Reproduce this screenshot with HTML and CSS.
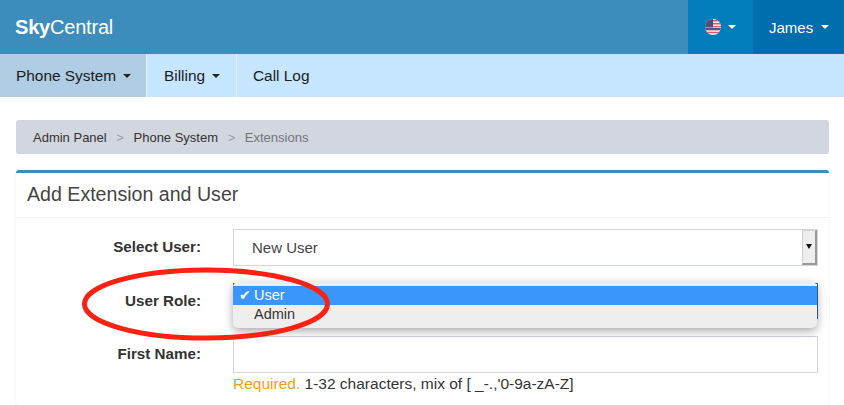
FILE: index.html
```html
<!DOCTYPE html>
<html lang="en">
<head>
<meta charset="utf-8">
<title>Add Extension and User</title>
<link rel="stylesheet" href="styles.css">
</head>
<body>
<header class="topbar">
  <a class="brand"><b>Sky</b>Central</a>
  <div class="top-right">
    <a class="top-item flag-item">
      <svg class="flag" width="16" height="16" viewBox="0 0 16 16">
        <defs><clipPath id="c"><circle cx="8" cy="8" r="8"/></clipPath></defs>
        <g clip-path="url(#c)">
          <rect width="16" height="16" fill="#f2f0f2"/>
          <rect y="1" width="16" height="1.5" fill="#d9596f"/>
          <rect y="4" width="16" height="1.5" fill="#d9596f"/>
          <rect y="7" width="16" height="1.3" fill="#d9596f"/>
          <rect y="10" width="16" height="1.3" fill="#c9283f"/>
          <rect y="12.8" width="16" height="1.4" fill="#d9596f"/>
          <rect y="9" width="16" height="0.8" fill="#1c2a50"/>
          <rect width="8" height="8.4" fill="#45527f"/>
        </g>
      </svg>
      <span class="caret"></span>
    </a>
    <a class="top-item user-item">James<span class="caret"></span></a>
  </div>
</header>
<nav class="subnav">
  <a class="nav-item active">Phone System<span class="caret dark"></span></a>
  <a class="nav-item">Billing<span class="caret dark"></span></a>
  <a class="nav-item">Call Log</a>
</nav>
<main class="content">
  <ol class="crumbs">
    <li>Admin Panel</li>
    <li class="sep">&gt;</li>
    <li>Phone System</li>
    <li class="sep">&gt;</li>
    <li class="current">Extensions</li>
  </ol>
  <section class="panel">
    <h1 class="panel-title">Add Extension and User</h1>
    <form class="panel-body">
      <div class="row">
        <label class="label">Select User:</label>
        <div class="control select-box">
          <span>New User</span>
          <span class="stepper"><i></i></span>
        </div>
      </div>
      <div class="row">
        <label class="label">User Role:</label>
        <div class="control role-box"></div>
      </div>
      <div class="row">
        <label class="label">First Name:</label>
        <div class="control"></div>
      </div>
      <p class="hint"><span class="req">Required.</span> 1-32 characters, mix of [ _-.,'0-9a-zA-Z]</p>
    </form>
  </section>
</main>
<div class="menu">
  <div class="menu-opt selected"><span class="tick">✔</span>User</div>
  <div class="menu-opt">Admin</div>
</div>
<svg class="ring" width="260" height="84" viewBox="0 0 260 84">
  <ellipse cx="130" cy="42" rx="121.5" ry="34" fill="none" stroke="#fb2113" stroke-width="5"/>
</svg>
</body>
</html>
```
FILE: styles.css
```css
* { box-sizing: border-box; }
html, body { margin: 0; height: 405px; overflow: hidden; }
body { position: relative; background: #fff; font-family: "Liberation Sans", Arial, sans-serif; font-size: 14px; color: #333; }

.topbar { display: flex; justify-content: space-between; height: 54px; background: #3c8dbc; }
.brand { padding-left: 15px; line-height: 54px; font-size: 20px; color: #fff; letter-spacing: -0.2px; }
.brand b { font-weight: 700; }
.top-right { display: flex; }
.top-item { display: flex; align-items: center; color: #fff; font-size: 15px; }
.flag-item { width: 65px; padding-left: 17px; background: #007dba; }
.user-item { width: 91px; padding-left: 16px; background: #006dac; }
.flag { display: block; }
.caret { display: inline-block; flex: none; width: 0; height: 0; margin-left: 7px; border-top: 4px solid #fff; border-left: 4px solid transparent; border-right: 4px solid transparent; }
.user-item .caret { margin-left: 8px; }
.caret.dark { margin-left: 7px; border-top-color: #222; }

.subnav { display: flex; height: 43px; background: #c6e5ff; }
.nav-item { display: flex; align-items: center; padding: 0 16px; color: #1c1c1c; font-size: 15.4px; white-space: nowrap; border-right: 1px solid #e6f1f8; }
.nav-item:last-child { border-right: 0; }
.nav-item.active { width: 147px; background: #afcde3; }
.nav-item:nth-child(2) { width: 90px; padding-left: 17px; }

.content { padding: 23px 15px 0 16px; }
.crumbs { display: flex; align-items: center; gap: 9.6px; height: 34px; margin: 0; padding: 0 17px; list-style: none; background: #d2d6de; border-radius: 3px; font-size: 13px; color: #333; }
.sep { color: #9b9ea5; }
.current { color: #72757b; }

.panel { margin-top: 16px; border-top: 3px solid #3c8dbc; border-radius: 3px; box-shadow: 0 0 2px rgba(0,0,0,.12); background: #fff; height: 235px; }
.panel-title { margin: 0; height: 45px; padding: 0 11px; line-height: 42px; font-size: 19.6px; font-weight: 400; color: #444; border-bottom: 1px solid #f2f2f2; }
.panel-body { padding: 11px 11px 0 0; }
.row { display: flex; height: 36.5px; margin-bottom: 17px; }
.row:nth-child(3) { margin-bottom: 0; }
.label { width: 185px; flex: none; padding-top: 9px; text-align: right; font-size: 15.2px; font-weight: 700; color: #333; }
.control { flex: 1; margin-left: 32px; border: 1px solid #d2d6de; background: #fff; }
.select-box { display: flex; justify-content: space-between; align-items: center; padding-left: 18px; font-size: 15px; color: #444; }
.stepper { display: flex; align-items: center; justify-content: center; align-self: stretch; width: 15px; background: #eee; border: 1px solid #d0d0d0; border-right: 2px solid #999; border-bottom: 2px solid #999; }
.stepper i { width: 0; height: 0; border-top: 5px solid #111; border-left: 3px solid transparent; border-right: 3px solid transparent; }
.role-box { border-color: #2b6f9e; }
.hint { margin: 1px 0 0 217px; font-size: 15.5px; color: #333; line-height: 20px; }
.req { color: #f39c12; }

.menu { position: absolute; left: 233px; top: 282px; width: 584px; height: 46px; padding-top: 4px; background: #eee; border-radius: 5px; box-shadow: 0 3px 10px rgba(0,0,0,.35); font-size: 14.5px; color: #333; }
.menu-opt { height: 19px; padding-left: 21px; line-height: 19px; position: relative; }
.menu-opt.selected { background: #3a96fb; color: #fff; }
.tick { position: absolute; left: 6px; top: 0; font-family: "DejaVu Sans", sans-serif; font-size: 14px; }

.ring { position: absolute; left: 76px; top: 262px; }
```
